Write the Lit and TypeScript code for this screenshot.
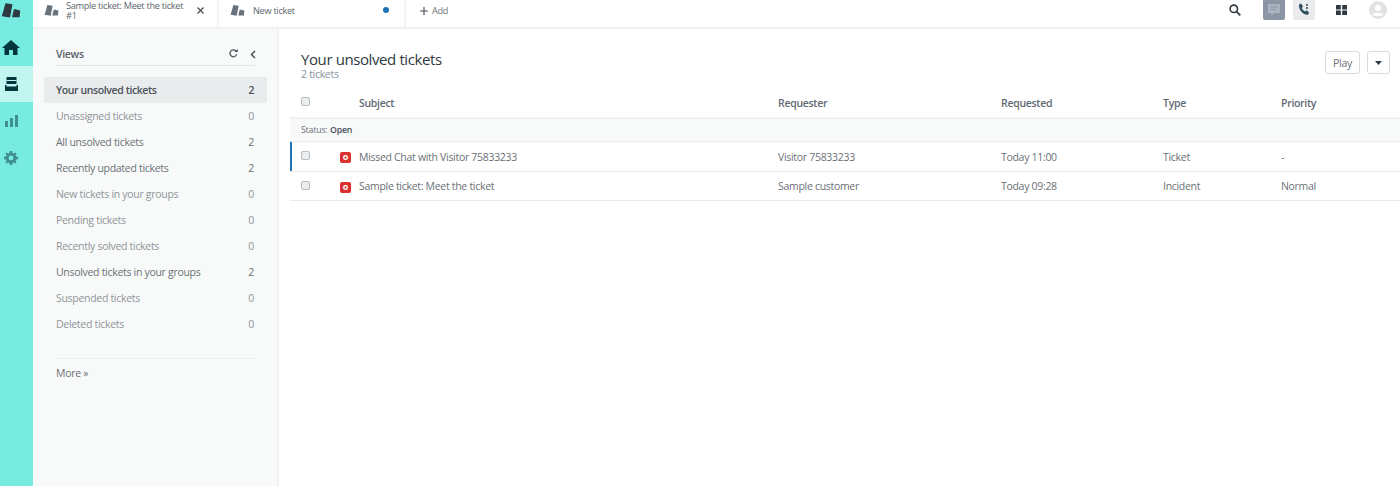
import { LitElement, html, css } from "lit";
import { customElement } from "lit/decorators.js";

const logo = (w: number, h: number, c: string) => html`<svg width=${w} height=${h} viewBox="0 0 20 15"><path fill=${c} d="M4.5 0.3 L11.5 1.3 L9 14.6 L0.8 13.2 Z M13 6 L19.2 7.5 L18.6 14.2 L11 14.2 Z"/></svg>`;

const views: [string, number, boolean][] = [
  ["Your unsolved tickets", 2, true],
  ["Unassigned tickets", 0, false],
  ["All unsolved tickets", 2, false],
  ["Recently updated tickets", 2, false],
  ["New tickets in your groups", 0, false],
  ["Pending tickets", 0, false],
  ["Recently solved tickets", 0, false],
  ["Unsolved tickets in your groups", 2, false],
  ["Suspended tickets", 0, false],
  ["Deleted tickets", 0, false],
];

const rows = [
  { s: "Missed Chat with Visitor 75833233", r: "Visitor 75833233", d: "Today 11:00", t: "Ticket", p: "-", mark: true },
  { s: "Sample ticket: Meet the ticket", r: "Sample customer", d: "Today 09:28", t: "Incident", p: "Normal", mark: false },
];

@customElement("app-root")
export class AppRoot extends LitElement {
  static styles = css`
    :host { display: block; width: 1400px; height: 486px; overflow: hidden; background: #fff; font-family: "Open Sans", "Noto Sans", sans-serif; font-size: 10.5px; letter-spacing: -0.3px; color: #6b7176; }
    * { box-sizing: border-box; }
    .app { display: flex; height: 486px; }
    .rail { width: 33px; flex: none; background: #78ebe0; display: flex; flex-direction: column; align-items: flex-start; }
    .rail-logo { width: 22px; height: 28px; display: flex; align-items: flex-start; justify-content: center; padding-top: 3px; }
    .rail-item { width: 33px; height: 37px; padding-right: 11px; display: flex; align-items: center; justify-content: center; }
    .rail-item.home { height: 38px; }
    .rail-item.active { background: #c1f6f0; height: 36px; }
    .main { flex: 1; min-width: 0; display: flex; flex-direction: column; }
    .top { height: 29px; flex: none; border-bottom: 2px solid #f0f1f2; display: flex; align-items: stretch; }
    .tab { display: flex; align-items: center; border-right: 2px solid #f3f4f4; padding-bottom: 7px; }
    .tab.one { width: 186px; padding-left: 11px; }
    .tab.two { width: 187px; padding-left: 11px; padding-right: 15px; }
    .tab-title { flex: 1; font-size: 9.2px; line-height: 10px; color: #5d666e; margin: 1px 0 0 7px; }
    .tab.one .tab-title span { display: block; max-width: 120px; }
    .tab.two .tab-title { margin-left: 8px; }
    .close { margin-right: 13px; display: flex; }
    .dot { width: 6px; height: 6px; border-radius: 50%; background: #1f73b7; }
    .add { display: flex; align-items: center; gap: 4px; padding: 0 0 6px 14px; font-size: 9.2px; }
    .top-right { margin-left: auto; display: flex; align-items: center; padding: 0 13px 7px 0; }
    .search { margin-right: 22px; display: flex; }
    .chan { width: 22px; height: 21px; border-radius: 0 0 2px 2px; display: flex; align-items: center; justify-content: center; margin-bottom: 1px; }
    .chan.chat { background: #8a96a6; margin-right: 8px; }
    .chan.talk { background: #e9ebed; margin-right: 21px; }
    .apps { margin-right: 22px; display: flex; }
    .avatar { display: flex; }
    .body { flex: 1; display: flex; min-height: 0; }
    .side { width: 246px; flex: none; background: #f8f9f9; border-right: 2px solid #f0f1f2; padding: 0 10px 0 11px; }
    .side-head { margin: 16px 12px 11px; height: 21px; padding-bottom: 2px; border-bottom: 1px solid #e5e7e8; display: flex; align-items: center; font-weight: 600; color: #59636b; }
    .side-head span { flex: 1; }
    .side-head svg { display: block; }
    .ref { margin: -2px 12px 0 0; }
    .chev { margin-right: -1px; }
    .view { height: 26px; padding: 0 13px 0 12px; display: flex; align-items: center; justify-content: space-between; color: #8f9599; }
    .view.has { color: #6b7176; }
    .view.on { background: #e9ebed; color: #49525a; font-weight: 600; letter-spacing: -0.4px; }
    .more-rule { margin: 21px 12px 0; border-top: 1px dotted #e3e5e6; padding-top: 7px; }
    .content { flex: 1; min-width: 0; padding: 0 0 0 11px; }
    .head { display: flex; justify-content: space-between; height: 59px; padding: 20px 10px 0 11px; }
    .title { font-size: 15px; line-height: 21px; font-weight: 500; letter-spacing: -0.4px; color: #2f3941; }
    .sub { line-height: 10px; color: #87929d; margin-top: -1px; }
    .actions { display: flex; gap: 7px; padding-top: 2px; }
    .btn { height: 23px; border: 1px solid #d8dcde; border-radius: 3px; background: #fff; display: flex; align-items: center; justify-content: center; }
    .btn.play { width: 35px; }
    .btn.drop { width: 23px; }
    .grid { display: grid; grid-template-columns: 69px 419px 223px 162px 118px 1fr; align-items: center; }
    .grid > div:first-child { padding-left: 11px; display: flex; }
    .hdr { height: 31px; font-weight: 600; color: #5f6a73; border-bottom: 2px solid #eff0f1; }
    .group { height: 23px; background: #f8f9f9; border-bottom: 1px solid #e9ebed; padding-left: 11px; display: flex; align-items: center; font-size: 8.8px; letter-spacing: -0.2px; }
    .group b { font-weight: 600; color: #49525a; margin-left: 2.5px; }
    .row { height: 29px; border-bottom: 1px solid #e9ebed; position: relative; }
    .row.mark { height: 30px; }
    .row.mark::before { content: ""; position: absolute; left: 0; top: 0; bottom: 0; width: 2px; background: #1f73b7; }
    .cb { width: 9px; height: 9px; border: 1px solid #b8bdc1; border-radius: 2px; background: #ebedee; flex: none; }
    .row .cb, .hdr .cb { margin-top: -2px; }
    .first { display: flex; align-items: center; }
    .badge { width: 11px; height: 11px; margin: 2px 0 0 30px; border-radius: 2px; background: #dc3030; color: #fff; font-size: 9px; font-weight: 700; line-height: 10px; text-align: center; letter-spacing: 0; flex: none; }
  `;

  render() {
    return html`<div class="app">
      <nav class="rail">
        <div class="rail-logo">${logo(20, 15, "#2f3941")}</div>
        <div class="rail-item home"><svg width="18" height="15" viewBox="0 0 18 15"><path fill="#03363d" d="M9 0 L18 8 L15.5 8 L15.5 15 L11 15 L11 10 L7 10 L7 15 L2.5 15 L2.5 8 L0 8 Z"/></svg></div>
        <div class="rail-item active"><svg width="13" height="14" viewBox="0 0 13 14"><path fill="#03363d" d="M1.5 0 H11.5 V7 H1.5 Z"/><path stroke="#c1f6f0" d="M1.5 3.5 H11.5"/><path fill="#03363d" d="M0 8 H1.5 V9.5 H11.5 V8 H13 V14 H0 Z"/></svg></div>
        <div class="rail-item"><svg width="13" height="12" viewBox="0 0 13 12"><path fill="#3f8f90" d="M0 6 H3 V12 H0 Z M5 3 H8 V12 H5 Z M10 0 H13 V12 H10 Z"/></svg></div>
        <div class="rail-item"><svg width="14" height="14" viewBox="0 0 14 14"><path fill="#3f8f90" fill-rule="evenodd" d="M5.8 0 H8.2 L8.5 1.9 L9.9 2.5 L11.5 1.4 L12.6 2.5 L11.5 4.1 L12.1 5.5 L14 5.8 V8.2 L12.1 8.5 L11.5 9.9 L12.6 11.5 L11.5 12.6 L9.9 11.5 L8.5 12.1 L8.2 14 H5.8 L5.5 12.1 L4.1 11.5 L2.5 12.6 L1.4 11.5 L2.5 9.9 L1.9 8.5 L0 8.2 V5.8 L1.9 5.5 L2.5 4.1 L1.4 2.5 L2.5 1.4 L4.1 2.5 L5.5 1.9 Z M7 4.6 A2.4 2.4 0 1 0 7 9.4 A2.4 2.4 0 1 0 7 4.6 Z"/></svg></div>
      </nav>
      <div class="main">
        <header class="top">
          <div class="tab one">${logo(15, 13, "#68737d")}<div class="tab-title"><span>Sample ticket: Meet the ticket #1</span></div>
            <span class="close"><svg width="7" height="7" viewBox="0 0 7 7"><path stroke="#49525a" stroke-width="1.3" d="M0.5 0.5 L6.5 6.5 M6.5 0.5 L0.5 6.5"/></svg></span></div>
          <div class="tab two">${logo(15, 13, "#68737d")}<div class="tab-title">New ticket</div><span class="dot"></span></div>
          <div class="add"><svg width="8" height="8" viewBox="0 0 8 8"><path stroke="#49525a" stroke-width="1.2" d="M4 0 V8 M0 4 H8"/></svg>Add</div>
          <div class="top-right">
            <span class="search"><svg width="12" height="12" viewBox="0 0 12 12"><circle cx="4.8" cy="4.8" r="3.7" fill="none" stroke="#2f3941" stroke-width="1.6"/><path stroke="#2f3941" stroke-width="1.8" d="M7.6 7.6 L11.3 11.3"/></svg></span>
            <span class="chan chat"><svg width="14" height="14" viewBox="0 0 14 14"><path fill="#aab4bf" d="M1 1 H13 V10 H7 L4.5 13 V10 H1 Z"/><path stroke="#8a96a6" d="M3.5 4 H10.5 M3.5 6.5 H8.5"/></svg></span>
            <span class="chan talk"><svg width="13" height="13" viewBox="0 0 13 13"><path fill="#2c4f5a" d="M1 1.5 L3 0.5 L5 3.5 L3.8 5 C4.3 6.5 5.5 7.8 7 8.5 L8.5 7.3 L11 9.5 L10 11.8 C5 12.2 0.5 6.5 1 1.5 Z"/><circle cx="9" cy="2" r="1" fill="#2c4f5a"/><circle cx="9" cy="5" r="1" fill="#2c4f5a"/></svg></span>
            <span class="apps"><svg width="11" height="10" viewBox="0 0 11 10"><path fill="#2f3941" d="M0 0 H4.8 V4.5 H0 Z M6.2 0 H11 V4.5 H6.2 Z M0 5.5 H4.8 V10 H0 Z M6.2 5.5 H11 V10 H6.2 Z"/></svg></span>
            <span class="avatar"><svg width="18" height="18" viewBox="0 0 18 18"><circle cx="9" cy="9" r="9" fill="#e0e2e3"/><circle cx="9" cy="7" r="3" fill="#fff"/><path fill="#fff" d="M3.5 14 C4.5 10.5 13.5 10.5 14.5 14 C13 15.5 5 15.5 3.5 14 Z"/></svg></span>
          </div>
        </header>
        <div class="body">
          <aside class="side">
            <div class="side-head"><span>Views</span>
              <svg class="ref" width="9" height="9" viewBox="0 0 9 9"><path fill="none" stroke="#49525a" stroke-width="1.3" d="M7.6 5.4 A3.4 3.4 0 1 1 6.8 2"/><path fill="#49525a" d="M5.4 2.9 H8.8 V0 Z"/></svg>
              <svg class="chev" width="6" height="9" viewBox="0 0 6 9"><path fill="none" stroke="#49525a" stroke-width="1.5" d="M5 1 L1.5 4.5 L5 8"/></svg>
            </div>
            ${views.map(([n, c, on]) => html`<div class="view ${on ? "on" : c ? "has" : ""}"><span>${n}</span><span>${c}</span></div>`)}
            <div class="more-rule">More »</div>
          </aside>
          <section class="content">
            <div class="head">
              <div><div class="title">Your unsolved tickets</div><div class="sub">2 tickets</div></div>
              <div class="actions"><div class="btn play">Play</div><div class="btn drop"><svg width="7" height="4" viewBox="0 0 7 4"><path fill="#2f3941" d="M0 0 H7 L3.5 4 Z"/></svg></div></div>
            </div>
            <div class="grid hdr"><div><span class="cb"></span></div><div>Subject</div><div>Requester</div><div>Requested</div><div>Type</div><div>Priority</div></div>
            <div class="group">Status:<b>Open</b></div>
            ${rows.map((r) => html`<div class="grid row ${r.mark ? "mark" : ""}"><div class="first"><span class="cb"></span><span class="badge">o</span></div><div>${r.s}</div><div>${r.r}</div><div>${r.d}</div><div>${r.t}</div><div>${r.p}</div></div>`)}
          </section>
        </div>
      </div>
    </div>`;
  }
}
